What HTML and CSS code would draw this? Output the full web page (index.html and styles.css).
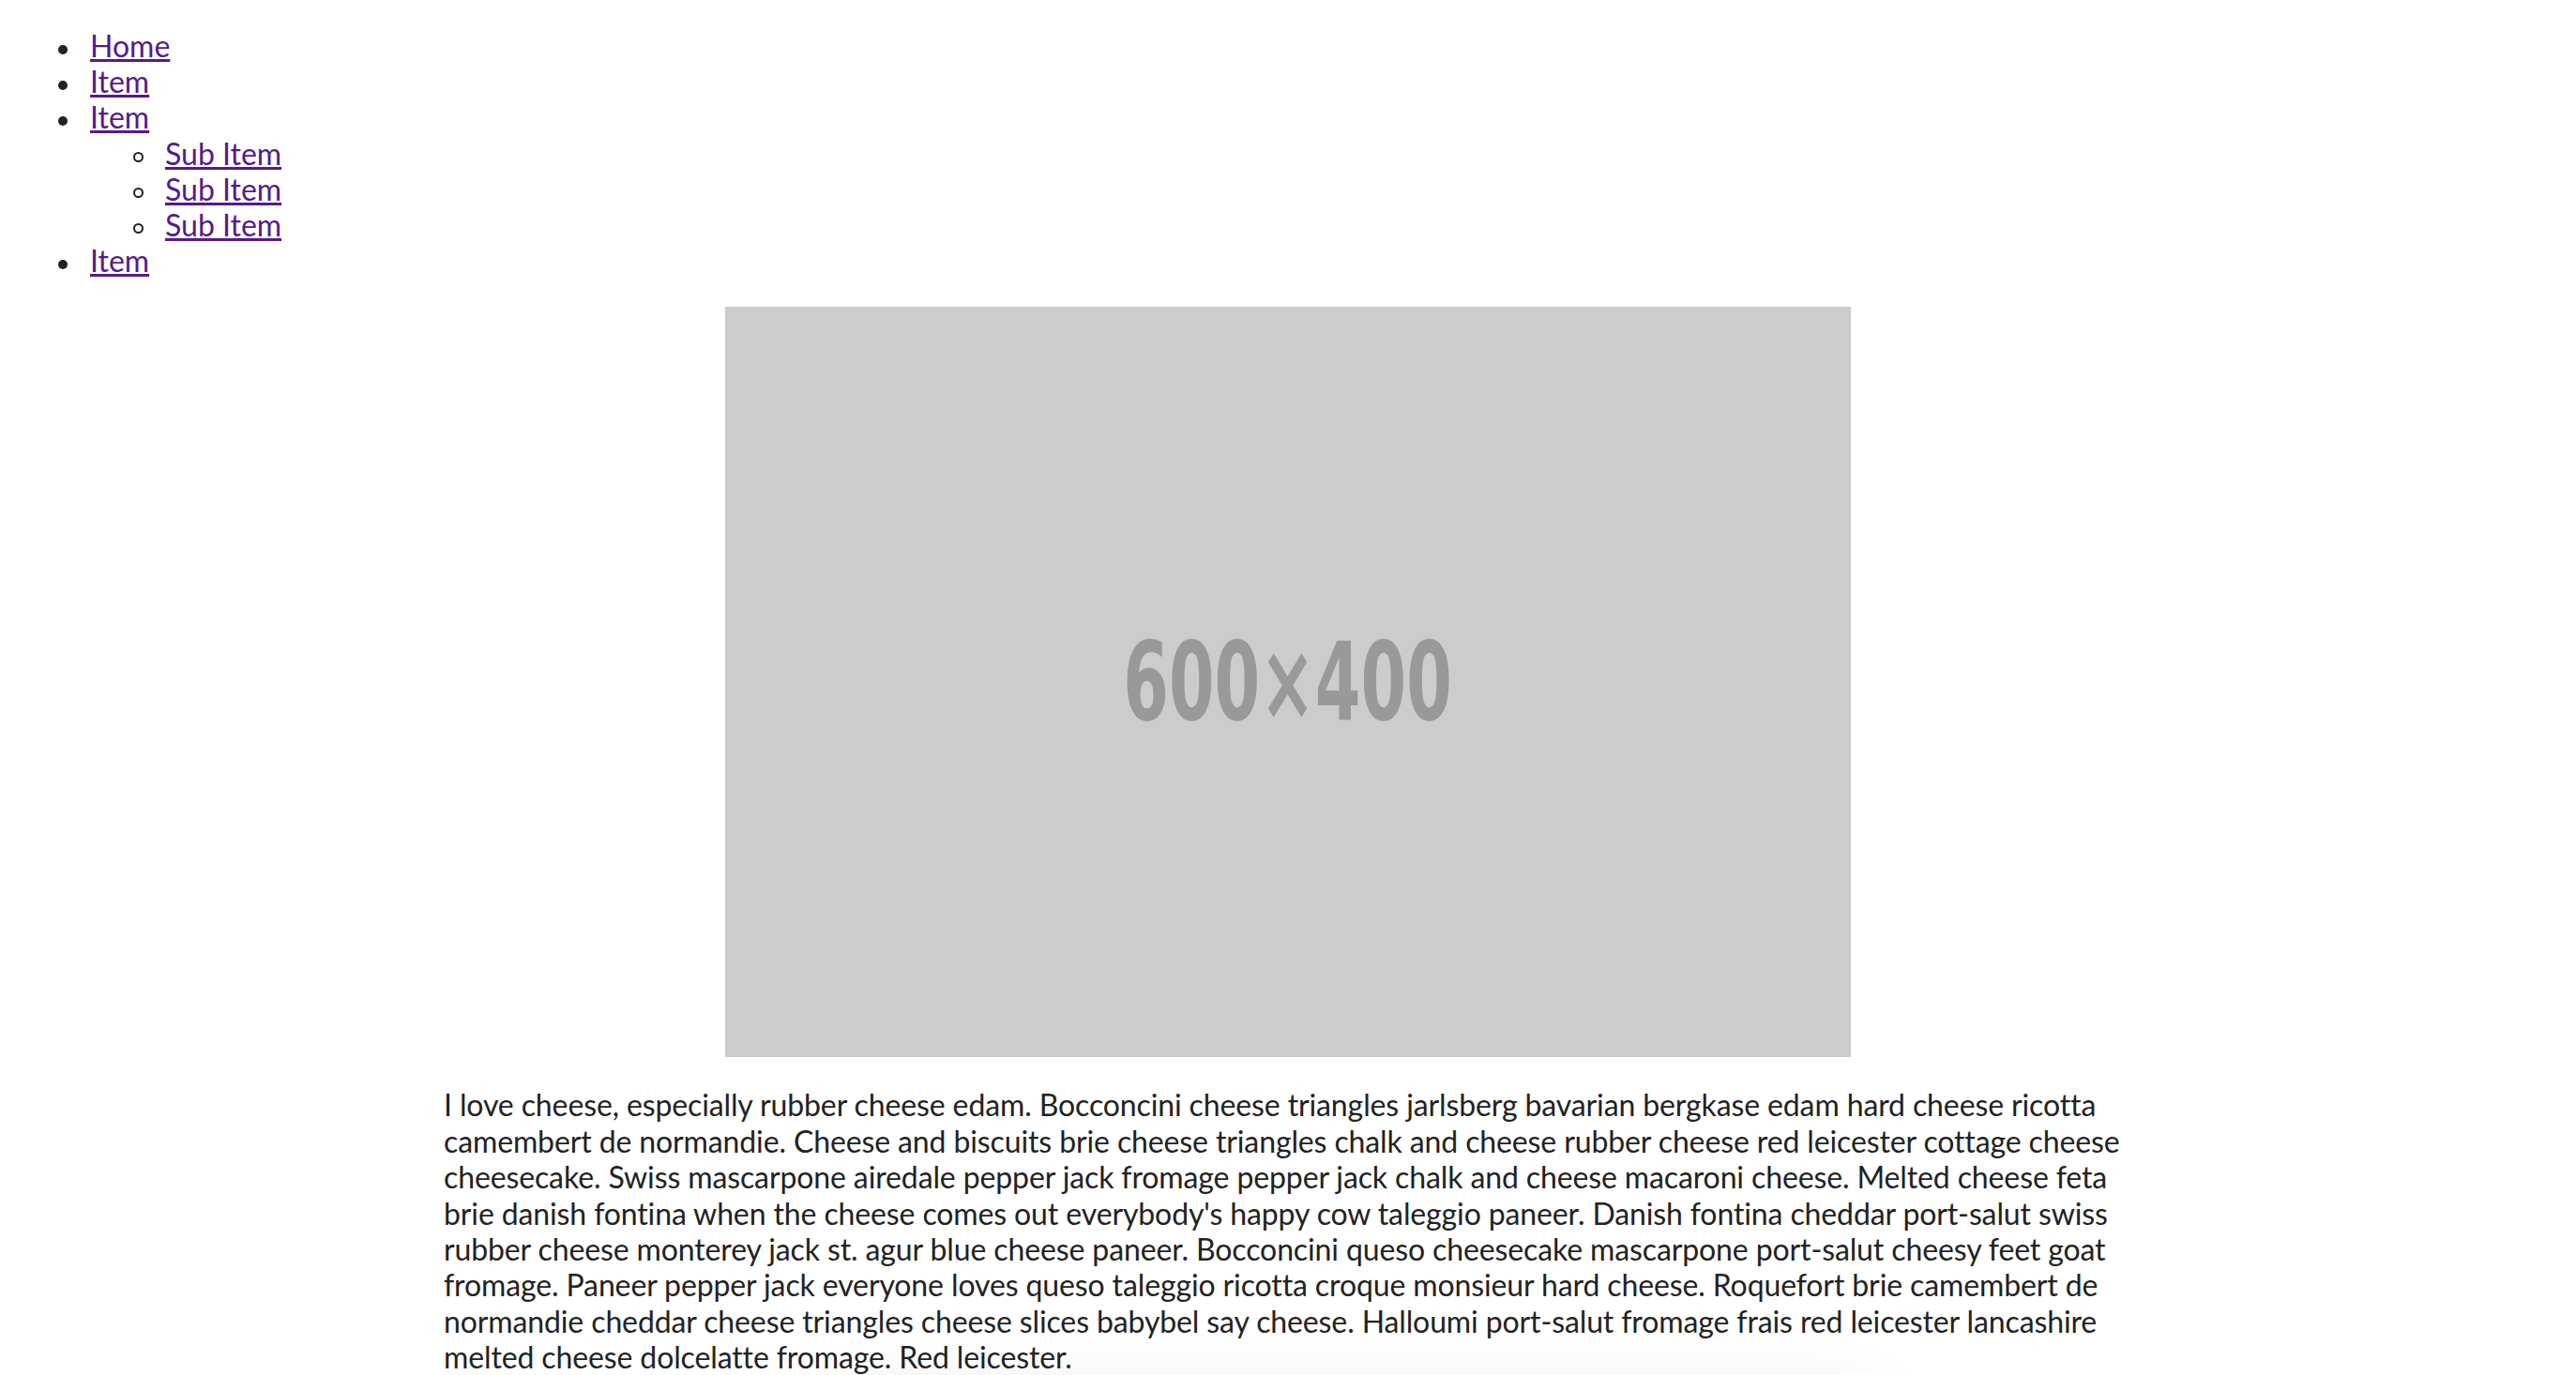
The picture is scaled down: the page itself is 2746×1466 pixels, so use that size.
FILE: index.html
```html
<!DOCTYPE html>
<html lang="en">
<head>
<meta charset="utf-8">
<title>Cheese</title>
<link rel="stylesheet" href="styles.css">
</head>
<body>
<nav class="nav">
  <ul class="nav-list">
    <li class="nav-item"><a href="#">Home</a></li>
    <li class="nav-item"><a href="#">Item</a></li>
    <li class="nav-item"><a href="#">Item</a>
      <ul class="sub-list">
        <li class="sub-item"><a href="#">Sub Item</a></li>
        <li class="sub-item"><a href="#">Sub Item</a></li>
        <li class="sub-item"><a href="#">Sub Item</a></li>
      </ul>
    </li>
    <li class="nav-item"><a href="#">Item</a></li>
  </ul>
</nav>
<main class="main">
  <div class="placeholder"><span class="placeholder-label">600×400</span></div>
  <p class="copy">I love cheese, especially rubber cheese edam. Bocconcini cheese triangles jarlsberg bavarian bergkase edam hard cheese ricotta camembert de normandie. Cheese and biscuits brie cheese triangles chalk and cheese rubber cheese red leicester cottage cheese cheesecake. Swiss mascarpone airedale pepper jack fromage pepper jack chalk and cheese macaroni cheese. Melted cheese feta brie danish fontina when the cheese comes out everybody's happy cow taleggio paneer. Danish fontina cheddar port-salut swiss rubber cheese monterey jack st. agur blue cheese paneer. Bocconcini queso cheesecake mascarpone port-salut cheesy feet goat fromage. Paneer pepper jack everyone loves queso taleggio ricotta croque monsieur hard cheese. Roquefort brie camembert de normandie cheddar cheese triangles cheese slices babybel say cheese. Halloumi port-salut fromage frais red leicester lancashire melted cheese dolcelatte fromage. Red leicester.</p>
  <div class="card"></div>
</main>
</body>
</html>
```

FILE: styles.css
```css
html, body {
  background: #ffffff;
}
body {
  margin: 0;
  padding: 0 16px;
  font-family: Lato, "Open Sans", sans-serif;
  font-size: 32px;
  line-height: 38.4px;
  color: #222222;
}
a {
  color: #551a8b;
  text-decoration: underline;
}
.nav-list {
  margin: 30px 0 0;
  padding-left: 80px;
  list-style: none;
  line-height: 38.2px;
}
.sub-list {
  margin: 0;
  padding-left: 80px;
  list-style: none;
}
.nav-item::before {
  content: "";
  display: inline-block;
  width: 10px;
  height: 10px;
  border-radius: 50%;
  background: #222222;
  margin-left: -34px;
  margin-right: 24px;
  vertical-align: middle;
}
.sub-item::before {
  content: "";
  display: inline-block;
  box-sizing: border-box;
  width: 11px;
  height: 11px;
  border-radius: 50%;
  border: 2px solid #222222;
  margin-left: -34px;
  margin-right: 23px;
  vertical-align: middle;
}
.main {
  display: flex;
  flex-direction: column;
  align-items: center;
}
.placeholder {
  margin-top: 30px;
  width: 1200px;
  height: 800px;
  background: #cccccc;
  display: flex;
  align-items: center;
  justify-content: center;
}
.placeholder-label {
  font-family: "DejaVu Sans Condensed", "DejaVu Sans", sans-serif;
  font-weight: bold;
  font-size: 116px;
  line-height: 1;
  color: #999999;
  transform: scaleX(0.67);
}
.copy {
  margin: 32px 0 0;
  width: 1800px;
  max-width: 100%;
  letter-spacing: -0.12px;
}
.card {
  margin-top: 40px;
  margin-left: 140px;
  width: 1100px;
  height: 200px;
  box-shadow: 0 0 90px rgba(0, 0, 0, 0.15);
}
```
